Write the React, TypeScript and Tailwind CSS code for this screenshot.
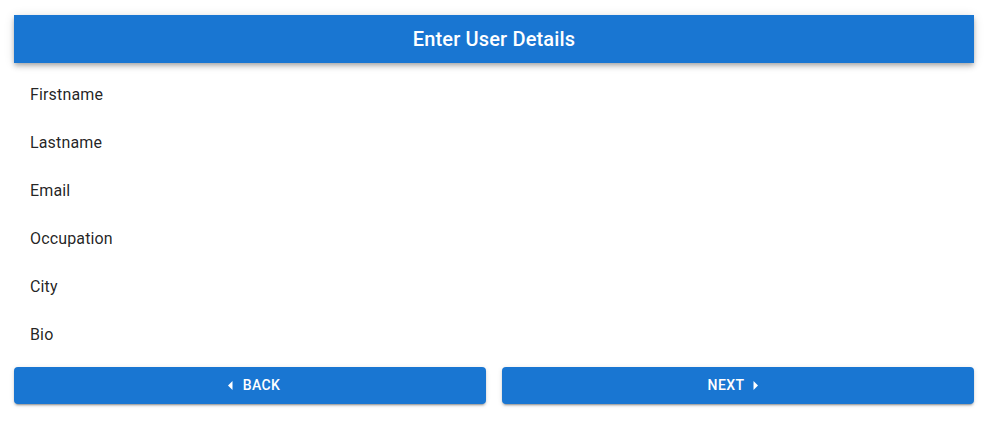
import React from "react";

const items = ["Firstname", "Lastname", "Email", "Occupation", "City", "Bio"];

const btn =
  "h-[37px] rounded bg-[#1976d2] text-white text-[14px] font-medium uppercase tracking-[0.4px] flex items-center justify-center shadow-[0_3px_1px_-2px_rgba(0,0,0,0.2),0_2px_2px_0_rgba(0,0,0,0.14),0_1px_5px_0_rgba(0,0,0,0.12)]";

export default function App() {
  return (
    <div
      className="w-[991px] h-[429px] bg-white pl-[14px] pr-[17px] pt-[15px]"
      style={{ fontFamily: "Roboto, 'Liberation Sans', sans-serif" }}
    >
      <div className="h-12 bg-[#1976d2] flex items-center justify-center shadow-[0_2px_4px_-1px_rgba(0,0,0,0.2),0_4px_5px_0_rgba(0,0,0,0.14),0_1px_10px_0_rgba(0,0,0,0.12)]">
        <span className="text-white text-[20px] font-medium tracking-[0.15px]">Enter User Details</span>
      </div>
      <ul className="pt-[8px]">
        {items.map((t) => (
          <li key={t} className="h-12 flex items-center pl-4 text-[16px] text-[rgba(0,0,0,0.87)] tracking-[0.15px]">
            {t}
          </li>
        ))}
      </ul>
      <div className="mt-[8px] grid grid-cols-2 gap-4">
        <button className={btn + " pl-[8px]"}>
          <svg width="5" height="9" viewBox="0 0 5 9" className="mr-[10px]"><path d="M4.5 0 L0 4.5 L4.5 9 Z" fill="white" /></svg>
          <span>Back</span>
        </button>
        <button className={btn + " pr-[10px]"}>
          <span>Next</span>
          <svg width="5" height="9" viewBox="0 0 5 9" className="ml-[9px]"><path d="M0.5 0 L5 4.5 L0.5 9 Z" fill="white" /></svg>
        </button>
      </div>
    </div>
  );
}
